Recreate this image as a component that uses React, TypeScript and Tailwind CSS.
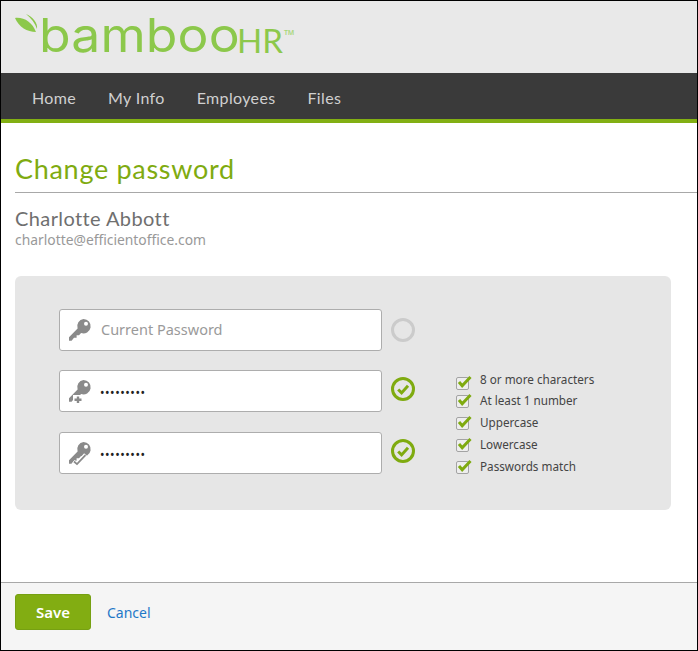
import React from 'react';

const NAV_ITEMS = ['Home', 'My Info', 'Employees', 'Files'];

const RULES = [
  { label: '8 or more characters', rowClass: 'mb-[5px]', boxClass: 'translate-y-[3px]' },
  { label: 'At least 1 number', rowClass: 'mb-[6px]', boxClass: '' },
  { label: 'Uppercase', rowClass: 'mb-[6px]', boxClass: '' },
  { label: 'Lowercase', rowClass: 'mb-[6px]', boxClass: '' },
  { label: 'Passwords match', rowClass: '', boxClass: '' },
];

function KeyIcon({ badge }: { badge?: 'plus' | 'check' }) {
  return (
    <svg width="24" height="26" viewBox="0 0 24 26" className="shrink-0">
      <path
        d="M15.5 2a7.2 7.2 0 1 1-2.4 14L11 18.2H8.6v2.6H6l-2.4 3H1v-3.6l8.6-8.8A7.2 7.2 0 0 1 15.5 2z"
        fill="#8a8a8a"
      />
      <circle cx="18" cy="6.8" r="2" fill="#fff" />
      {badge === 'plus' && (
        <g>
          <path d="M5 17h11v9H5z" fill="#fff" />
          <path d="M10 18.5v6.5M6.5 21.8h7" stroke="#8a8a8a" strokeWidth="2.4" />
        </g>
      )}
      {badge === 'check' && (
        <g>
          <path d="M5 22l4 3 9-10" fill="none" stroke="#fff" strokeWidth="5" />
          <path d="M6 21.5l3 2.6 8.5-9" fill="none" stroke="#8a8a8a" strokeWidth="1.8" />
        </g>
      )}
    </svg>
  );
}

function StatusCircle({ done }: { done: boolean }) {
  if (!done) {
    return <div className="ml-[9px] h-6 w-6 rounded-full border-[3px] border-[#cbcbcb]" />;
  }
  return (
    <svg width="24" height="24" viewBox="0 0 24 24" className="ml-[9px] -translate-y-[2px]">
      <circle cx="12" cy="12" r="10.5" fill="none" stroke="#7fab10" strokeWidth="3" />
      <path d="M7.2 12.5l3.4 3.4L17 8.8" fill="none" stroke="#7fab10" strokeWidth="3" />
    </svg>
  );
}

function RuleCheck({ className }: { className: string }) {
  return (
    <svg width="16" height="15" viewBox="0 0 16 15" className={`shrink-0 ${className}`}>
      <rect x="0.5" y="2.5" width="12" height="12" rx="1.5" fill="#eeeeee" stroke="#a3a3a3" />
      <path d="M3 7l3.2 3.8L14.5 2" fill="none" stroke="#7fab10" strokeWidth="3" />
    </svg>
  );
}

function PasswordField({
  placeholder,
  badge,
  done,
  className,
}: {
  placeholder?: string;
  badge?: 'plus' | 'check';
  done: boolean;
  className: string;
}) {
  return (
    <div className={`flex items-center ${className}`}>
      <div className="flex h-[42px] w-[323px] items-center rounded-[3px] border border-[#adadad] bg-white pl-[8px]">
        <KeyIcon badge={badge} />
        {placeholder ? (
          <span className="ml-[9px] text-[14.5px] text-[#9a9a9a]">{placeholder}</span>
        ) : (
          <span className="ml-[8px] mt-[3px] text-[12px] leading-none tracking-[0.55px] text-[#222]">•••••••••</span>
        )}
      </div>
      <StatusCircle done={done} />
    </div>
  );
}

export default function App() {
  return (
    <div className="flex h-[651px] w-[698px] flex-col overflow-hidden border border-black bg-white font-['Noto_Sans',sans-serif]">
      <header className="flex h-[72px] shrink-0 items-start bg-[#e9e9e9] pl-[14px] pt-[4px]">
        <svg width="24" height="22" viewBox="0 0 24 22" className="mt-[9px] shrink-0">
          <path d="M0 4c9-1 17 4 21 14C12 18 4 13 0 4z" fill="#8cc84b" />
          <path d="M11 0c7 3 12 9 11 15C20 9 16 4 11 0z" fill="#8cc84b" />
        </svg>
        <span className="mt-[2px] w-[198px] origin-left scale-x-110 font-['Inter',sans-serif] text-[47px] font-normal leading-[56px] tracking-[0.1px] text-[#8cc84b]">
          bamboo
        </span>
        <span className="mt-[15px] font-['Lato',sans-serif] text-[33px] leading-[40px] text-[#8cc84b]">HR</span>
        <span className="ml-[1px] mt-[24px] text-[7px] font-semibold leading-none text-[#a8d77a]">TM</span>
      </header>

      <nav className="flex h-[46px] shrink-0 items-center gap-[32px] bg-[#3a3a3a] pl-[31px] pt-[4px] font-['Lato',sans-serif] text-[16px] tracking-[0.35px] text-[#d0d0d0]">
        {NAV_ITEMS.map(item => (
          <span key={item}>{item}</span>
        ))}
      </nav>
      <div className="h-1 shrink-0 bg-[#82af13]" />

      <main className="flex-1">
        <h1 className="ml-[14px] mt-[28px] font-['Lato',sans-serif] text-[27px] leading-[36px] tracking-[0.7px] text-[#7fab10]">
          Change password
        </h1>
        <div className="ml-[14px] mt-[5px] h-px bg-[#a8a8a8]" />
        <div className="ml-[14px] mt-[13px] font-['Lato',sans-serif] text-[20px] leading-[24px] tracking-[0.4px] text-[#6f6f6f]">
          Charlotte Abbott
        </div>
        <div className="ml-[14px] mt-[1px] text-[13.85px] leading-[18px] text-[#999]">charlotte@efficientoffice.com</div>

        <section className="ml-[14px] mt-[27px] flex h-[234px] w-[656px] rounded-[6px] bg-[#e6e6e6] pl-[44px] pt-[33px]">
          <div>
            <PasswordField placeholder="Current Password" done={false} className="" />
            <PasswordField badge="plus" done className="mt-[19px]" />
            <PasswordField badge="check" done className="mt-[20px]" />
          </div>
          <ul className="ml-[41px] mt-[62px] text-[11.7px] leading-[16px] text-[#444]">
            {RULES.map(rule => (
              <li key={rule.label} className={`flex items-center gap-[8px] ${rule.rowClass}`}>
                <RuleCheck className={rule.boxClass} />
                <span>{rule.label}</span>
              </li>
            ))}
          </ul>
        </section>
      </main>

      <footer className="flex h-[68px] shrink-0 items-center border-t border-[#a8a8a8] bg-[#f5f5f5] pb-[9px] pl-[14px]">
        <button className="h-[36px] w-[76px] rounded-[3px] border border-[#76a012] bg-[#82ad12] text-[15px] font-semibold text-white">
          Save
        </button>
        <a className="ml-[16px] text-[14px] text-[#1f78c8]">Cancel</a>
      </footer>
    </div>
  );
}
